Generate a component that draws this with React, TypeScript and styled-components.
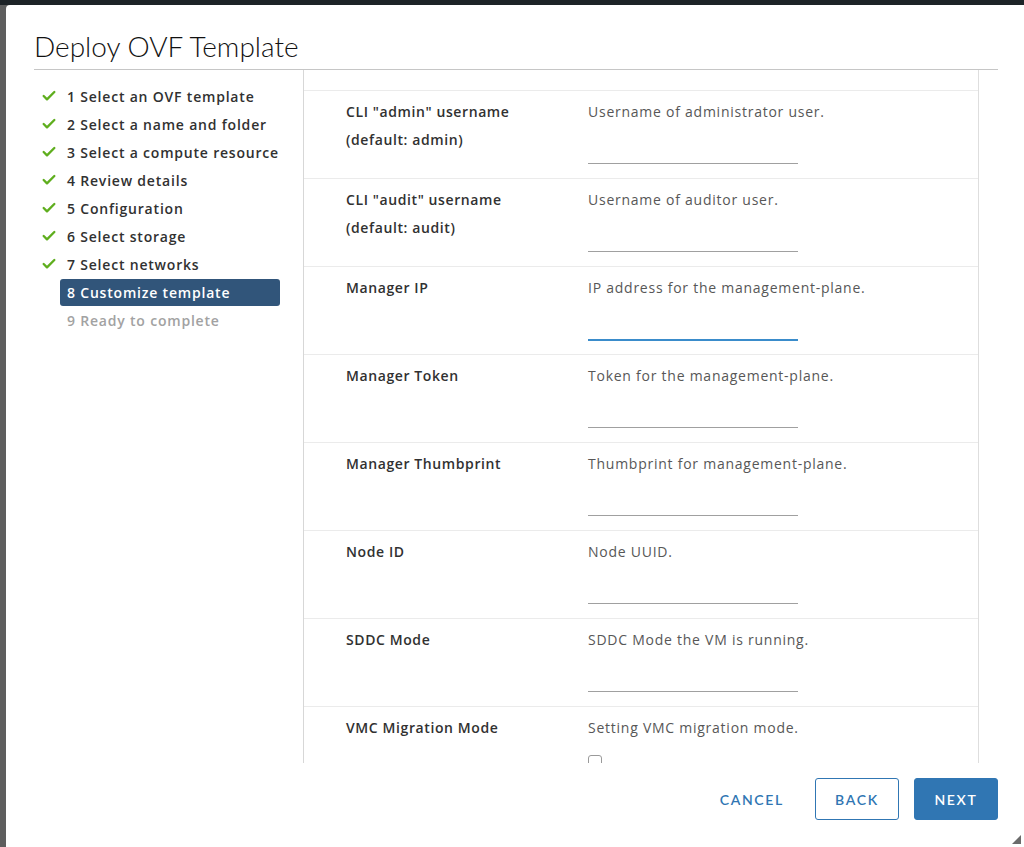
import styled, { createGlobalStyle } from "styled-components";
import { Check } from "lucide-react";

const GlobalStyle = createGlobalStyle`
  html, body {
    margin: 0;
    padding: 0;
    height: 100%;
    overflow: hidden;
  }
  body {
    background: #5e5e5e;
    font-family: "Open Sans", Lato, Arial, sans-serif;
  }
  * {
    box-sizing: border-box;
  }
`;

const Backdrop = styled.div`
  height: 847px;
  border-top: 5px solid #1d2327;
  padding-left: 6px;
`;

const Modal = styled.div`
  position: relative;
  height: 842px;
  background: #fff;
  border-top-left-radius: 4px;
  padding: 0 26px 0 28px;
`;

const Header = styled.div`
  padding: 24px 0 6px;
  border-bottom: 1px solid #c6c6c6;
`;

const Title = styled.h1`
  margin: 0;
  font-family: Lato, "Open Sans", Arial, sans-serif;
  font-size: 28px;
  line-height: 34px;
  font-weight: 300;
  color: #111;
`;

const Body = styled.div`
  display: grid;
  grid-template-columns: 270px 675px 1fr;
  height: 693px;
`;

const Nav = styled.ul`
  list-style: none;
  margin: 0;
  padding: 12px 23px 0 0;
  border-right: 1px solid #d7d7d7;
`;

const NavItem = styled.li`
  display: flex;
  align-items: center;
  height: 28px;
`;

const CheckSlot = styled.span`
  display: flex;
  justify-content: center;
  width: 26px;
  padding-left: 4px;
  color: #5fae1e;
`;

const NavLabel = styled.span<{ $state: "done" | "current" | "todo" }>`
  flex: 1;
  height: 27px;
  line-height: 27px;
  padding-left: 7px;
  border-radius: 3px;
  font-size: 14px;
  font-weight: 600;
  letter-spacing: 0.8px;
  white-space: nowrap;
  color: ${(p) =>
    p.$state === "current" ? "#fff" : p.$state === "todo" ? "#a2a2a2" : "#313131"};
  background: ${(p) => (p.$state === "current" ? "#31557a" : "transparent")};
`;

const Content = styled.div`
  overflow: hidden;
  border-right: 1px solid #dedede;
`;

const Tail = styled.div`
  height: 20px;
`;

const Row = styled.div`
  display: grid;
  grid-template-columns: 242px 1fr;
  height: 88px;
  padding: 7px 0 0 42px;
  border-top: 1px solid #ebebeb;
`;

const Label = styled.div`
  font-size: 14px;
  line-height: 28px;
  font-weight: 600;
  letter-spacing: 0.6px;
  color: #313131;
`;

const Field = styled.div`
  display: flex;
  flex-direction: column;
  align-items: flex-start;
`;

const Description = styled.div`
  font-size: 14px;
  line-height: 28px;
  letter-spacing: 0.75px;
  color: #575757;
`;

const Input = styled.div<{ $focused?: boolean }>`
  width: 210px;
  margin-top: ${(p) => (p.$focused ? "13px" : "14px")};
  height: ${(p) => (p.$focused ? "26px" : "24px")};
  border-bottom: ${(p) => (p.$focused ? "2px solid #3a8ccb" : "1px solid #a0a0a0")};
`;

const Checkbox = styled.div`
  width: 14px;
  height: 14px;
  margin-top: 13px;
  border: 1px solid #9a9a9a;
  border-radius: 3px;
`;

const Footer = styled.div`
  display: flex;
  justify-content: flex-end;
  align-items: center;
  gap: 15px;
  padding-top: 15px;
`;

const Button = styled.button<{ $kind: "flat" | "outline" | "primary" }>`
  height: 42px;
  min-width: 84px;
  padding: 0 12px;
  border-radius: 3px;
  font-family: Lato, "Open Sans", Arial, sans-serif;
  font-size: 14px;
  font-weight: 600;
  letter-spacing: 0.12em;
  cursor: pointer;
  border: 1px solid ${(p) => (p.$kind === "flat" ? "transparent" : "#3076b3")};
  background: ${(p) => (p.$kind === "primary" ? "#3076b3" : "#fff")};
  color: ${(p) => (p.$kind === "primary" ? "#fff" : "#3076b3")};
  margin-right: ${(p) => (p.$kind === "flat" ? "3px" : "0")};
`;

const Grip = styled.svg`
  position: absolute;
  right: 3px;
  bottom: 3px;
`;

const steps: { text: string; state: "done" | "current" | "todo" }[] = [
  { text: "1 Select an OVF template", state: "done" },
  { text: "2 Select a name and folder", state: "done" },
  { text: "3 Select a compute resource", state: "done" },
  { text: "4 Review details", state: "done" },
  { text: "5 Configuration", state: "done" },
  { text: "6 Select storage", state: "done" },
  { text: "7 Select networks", state: "done" },
  { text: "8 Customize template", state: "current" },
  { text: "9 Ready to complete", state: "todo" },
];

type Prop = {
  label: string[];
  description: string;
  kind?: "text" | "focused" | "checkbox";
};

const props: Prop[] = [
  { label: ['CLI "admin" username', "(default: admin)"], description: "Username of administrator user." },
  { label: ['CLI "audit" username', "(default: audit)"], description: "Username of auditor user." },
  { label: ["Manager IP"], description: "IP address for the management-plane.", kind: "focused" },
  { label: ["Manager Token"], description: "Token for the management-plane." },
  { label: ["Manager Thumbprint"], description: "Thumbprint for management-plane." },
  { label: ["Node ID"], description: "Node UUID." },
  { label: ["SDDC Mode"], description: "SDDC Mode the VM is running." },
  { label: ["VMC Migration Mode"], description: "Setting VMC migration mode.", kind: "checkbox" },
];

export default function App() {
  return (
    <>
      <GlobalStyle />
      <Backdrop>
        <Modal>
          <Header>
            <Title>Deploy OVF Template</Title>
          </Header>
          <Body>
            <Nav>
              {steps.map((s) => (
                <NavItem key={s.text}>
                  <CheckSlot>
                    {s.state === "done" && <Check size={16} strokeWidth={3.5} />}
                  </CheckSlot>
                  <NavLabel $state={s.state}>{s.text}</NavLabel>
                </NavItem>
              ))}
            </Nav>
            <Content>
              <Tail />
              {props.map((p) => (
                <Row key={p.label[0]}>
                  <Label>
                    {p.label.map((l) => (
                      <div key={l}>{l}</div>
                    ))}
                  </Label>
                  <Field>
                    <Description>{p.description}</Description>
                    {p.kind === "checkbox" ? (
                      <Checkbox />
                    ) : (
                      <Input $focused={p.kind === "focused"} />
                    )}
                  </Field>
                </Row>
              ))}
            </Content>
            <div />
          </Body>
          <Footer>
            <Button $kind="flat">CANCEL</Button>
            <Button $kind="outline">BACK</Button>
            <Button $kind="primary">NEXT</Button>
          </Footer>
          <Grip width="9" height="9" viewBox="0 0 9 9">
            <path d="M9 0 L9 9 L0 9 Z" fill="#6b6b6b" />
          </Grip>
        </Modal>
      </Backdrop>
    </>
  );
}
